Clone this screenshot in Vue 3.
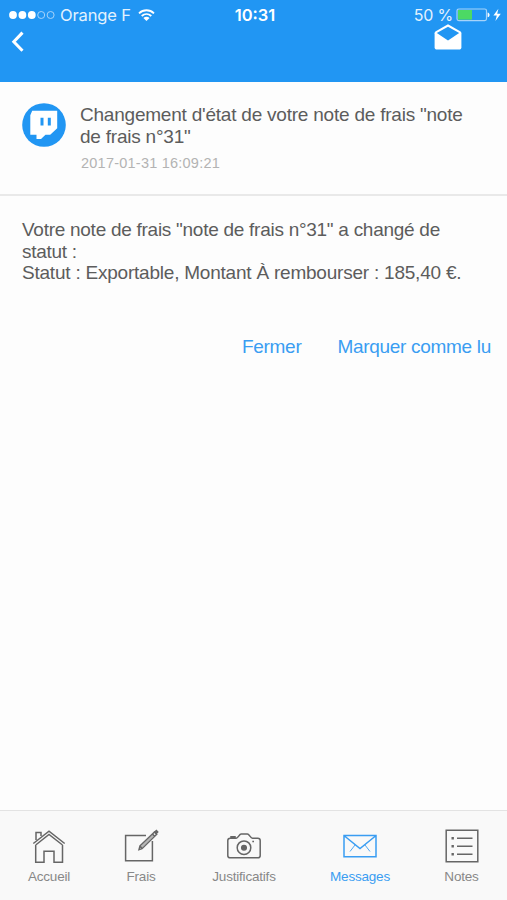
<template>
  <div class="screen">
    <header class="top">
      <div class="status-bar">
        <div class="carrier">
          <svg class="signal" width="47" height="10" viewBox="0 0 47 10">
            <circle v-for="n in 5" :key="n" :cx="4 + (n - 1) * 9.4" cy="5" :r="n < 4 ? 3.9 : 3.5" :class="n < 4 ? 'full' : 'empty'" />
          </svg>
          <span class="carrier-name">Orange F</span>
          <svg class="wifi" width="17" height="12" viewBox="0 0 17 12">
            <path d="M1 4.3C5.3.2 11.7.2 16 4.3M3.7 7C6.5 4.4 10.5 4.4 13.3 7" fill="none" stroke="#fff" stroke-width="1.8" />
            <path d="M8.5 12 5.4 8.9C7.2 7.3 9.8 7.3 11.6 8.9Z" fill="#fff" />
          </svg>
        </div>
        <span class="clock">10:31</span>
        <div class="power">
          <span class="percent">50 %</span>
          <svg width="46" height="14" viewBox="0 0 46 14">
            <rect x="1" y="1" width="29.5" height="11.6" rx="1.8" fill="none" stroke="#a6d3fa" stroke-width="1.2" />
            <rect x="2" y="2" width="14" height="9.6" fill="#4cd964" />
            <path d="M31.6 4.400c2.600.5 2.600 4.300 0 4.800z" fill="#fff" />
            <path d="M42.4.8 37.4 7.6H40.8L39.4 13 44.8 5.8H41.2Z" fill="#fff" />
          </svg>
        </div>
      </div>
      <div class="nav-bar">
        <button class="icon-button back" aria-label="Retour">
          <svg width="14" height="22" viewBox="0 0 14 22">
            <path d="M11.5 1.6 2.8 10.8l8.7 9" fill="none" stroke="#fff" stroke-width="3" />
          </svg>
        </button>
        <button class="icon-button mail" aria-label="Message lu">
          <svg width="28" height="27" viewBox="0 0 28 27">
            <path d="M14 .3 26.2 7.3c.8.5 1.2 1.1 1.2 2v13.9c0 1.4-1 2.4-2.4 2.4H3C1.6 25.6.6 24.6.6 23.2V9.3c0-.9.4-1.5 1.2-2z" fill="#fff" />
            <path d="M2.8 9 14 2.7 25.2 9 14 16.5z" fill="#2196f3" />
          </svg>
        </button>
      </div>
    </header>

    <main>
      <section class="message-head">
        <svg class="avatar" width="44" height="44" viewBox="0 0 44 44">
          <circle cx="22" cy="22" r="21.8" fill="#2196f3" />
          <path d="M10.2 7.800H35.200V25.300L28.200 31.800H23.500L19 36H14.500V31.800H8.300V12.200Z" fill="#fff" />
          <path d="M18.500 14.800h3v7.600h-3zM25.800 14.800h3v7.600h-3z" fill="#2196f3" />
        </svg>
        <div class="heading">
          <h1>Changement d'état de votre note de frais "note<br />de frais n°31"</h1>
          <time>2017-01-31 16:09:21</time>
        </div>
      </section>
      <p class="message-body">
        <span class="intro">Votre note de frais "note de frais n°31" a changé de<br />statut :</span><br />
        Statut : Exportable, Montant À rembourser : 185,40 €.
      </p>
      <div class="actions">
        <button>Fermer</button>
        <button>Marquer comme lu</button>
      </div>
    </main>

    <nav class="tab-bar">
      <a v-for="tab in tabs" :key="tab.id" class="tab" :class="{ active: current === tab.id }" @click="current = tab.id">
        <svg width="36" height="36" viewBox="0 0 36 36">
          <g v-if="tab.id === 'home'">
            <path d="M2.3 15.5 18 3.2l15.7 12.3M4.7 17v17.3H13V23.3h10v11h8.500V17M4.700 17 18 6.500 31.500 17M5 12V4.500h5V8" />
          </g>
          <g v-else-if="tab.id === 'expenses'">
            <path d="M23 7.5H2.6v25.3h26.800V13" />
            <path d="M16 21.6l1-3.700L31.500 4l2.200 2.200L19 20.700zM17 18l2 2.500M29.500 6l2.200 2.200" />
            <path d="M18 19.5 30.5 7" class="thin" />
            <path d="M31.7 4 33.4 2.6l1.3 1.3-1.500 1.600z" fill="currentColor" />
          </g>
          <g v-else-if="tab.id === 'receipts'">
            <path d="M4.2 10.2h6c2 0 3-4.200 5-4.200h6.200c2 0 3 4.200 5 4.200h5.400c1.600 0 2.400.9 2.400 2.400v14.800c0 1.500-.8 2.400-2.400 2.400H4.200c-1.500 0-2.400-.9-2.400-2.400V12.600c0-1.500.9-2.400 2.400-2.400zM5 10V8.700h4V10" />
            <circle cx="18" cy="19.7" r="6.8" />
            <circle cx="18" cy="19.7" r="2.3" fill="currentColor" />
            <path d="M26.3 13.5h1.700" />
          </g>
          <g v-else-if="tab.id === 'messages'">
            <path d="M2 7.5h32v21.300H2zM2.500 8 18 20.500 33.500 8" />
            <path d="M13 17 8 23.500M23 17l5 6.500" class="thin" />
          </g>
          <g v-else>
            <path d="M2.2 2.2h31.600v31.600H2.200z" />
            <path d="M13 10.3h15.500M13 18.300h15.500M13 26.300h15.500" />
            <path d="M7.5 10.3h2.400M7.500 18.300h2.400M7.500 26.300h2.400" class="dots" />
          </g>
        </svg>
        <span>{{ tab.label }}</span>
      </a>
    </nav>
  </div>
</template>

<script setup>
import { ref } from 'vue';

const current = ref('messages');
const tabs = [
  { id: 'home', label: 'Accueil' },
  { id: 'expenses', label: 'Frais' },
  { id: 'receipts', label: 'Justificatifs' },
  { id: 'messages', label: 'Messages' },
  { id: 'notes', label: 'Notes' },
];
</script>

<style>
body {
  background: #fdfdfd;
}
</style>

<style scoped>
.screen {
  display: flex;
  flex-direction: column;
  height: 900px;
  background: #fdfdfd;
  color: #5c5c5c;
  font-family: "Liberation Sans", Arial, sans-serif;
}

button {
  border: 0;
  padding: 0;
  background: none;
  font: inherit;
  color: inherit;
  letter-spacing: inherit;
}

svg {
  display: block;
}

.top {
  height: 82px;
  box-sizing: border-box;
  background: #2196f3;
  color: #fff;
}

.status-bar {
  display: grid;
  grid-template-columns: 1fr auto 1fr;
  align-items: center;
  height: 30px;
  padding: 0 5px 0 9px;
  box-sizing: border-box;
}

.carrier,
.power {
  display: flex;
  align-items: center;
}

.signal .full {
  fill: #fff;
}

.signal .empty {
  fill: none;
  stroke: #a6d3fa;
  stroke-width: 1;
}

.carrier-name {
  margin: 0 7px 0 4px;
  font: 16.5px/20px Inter, sans-serif;
  letter-spacing: -0.15px;
  color: #e3f2fe;
}

.clock {
  margin-right: 1px;
  font: 600 16.5px/20px Inter, sans-serif;
}

.power {
  justify-content: flex-end;
}

.percent {
  margin-right: 3px;
  font: 16px/20px Inter, sans-serif;
  letter-spacing: -0.2px;
  color: #e3f2fe;
}

.nav-bar {
  display: flex;
  align-items: flex-start;
  justify-content: space-between;
  padding: 0 45px 0 11px;
}

.back {
  margin-top: 1px;
}

.mail {
  margin-top: -6px;
}

.message-head {
  display: flex;
  height: 114px;
  padding: 21px 22px 0;
  box-sizing: border-box;
  border-bottom: 2px solid #e9e9e9;
}

.heading {
  margin: 1px 0 0 14px;
}

h1 {
  margin: 0;
  font-size: 19px;
  font-weight: 400;
  line-height: 21.5px;
  letter-spacing: -0.22px;
  white-space: nowrap;
}

time {
  display: block;
  margin: 7px 0 0 1px;
  font-size: 14.5px;
  line-height: 18px;
  letter-spacing: 0.23px;
  color: #b3b3b3;
}

.message-body {
  margin: 23px 22px 0;
  font-size: 19px;
  line-height: 21.5px;
  letter-spacing: -0.22px;
  white-space: nowrap;
}

.intro {
  letter-spacing: -0.27px;
}

.actions {
  display: flex;
  justify-content: flex-end;
  gap: 36px;
  margin-top: 52px;
  padding-right: 16px;
  font-size: 19px;
  line-height: 22px;
  letter-spacing: -0.3px;
  color: #3a9df2;
}

.tab-bar {
  display: grid;
  grid-template-columns: 98px 86px 120px 112px 91px;
  height: 90px;
  margin-top: auto;
  padding-top: 17px;
  box-sizing: border-box;
  border-top: 1px solid #e3e3e3;
  background: #f9f9f9;
}

.tab {
  display: flex;
  flex-direction: column;
  align-items: center;
  color: #666;
}

.tab svg {
  fill: none;
  stroke: currentColor;
  stroke-width: 1.5;
}

.tab .thin {
  stroke-width: 0.9;
}

.tab .dots {
  stroke-width: 2.4;
}

.tab span {
  margin-top: 5px;
  font-size: 13.5px;
  line-height: 16px;
  letter-spacing: -0.2px;
  color: #888;
}

.tab.active,
.tab.active span {
  color: #3a9df2;
}
</style>
